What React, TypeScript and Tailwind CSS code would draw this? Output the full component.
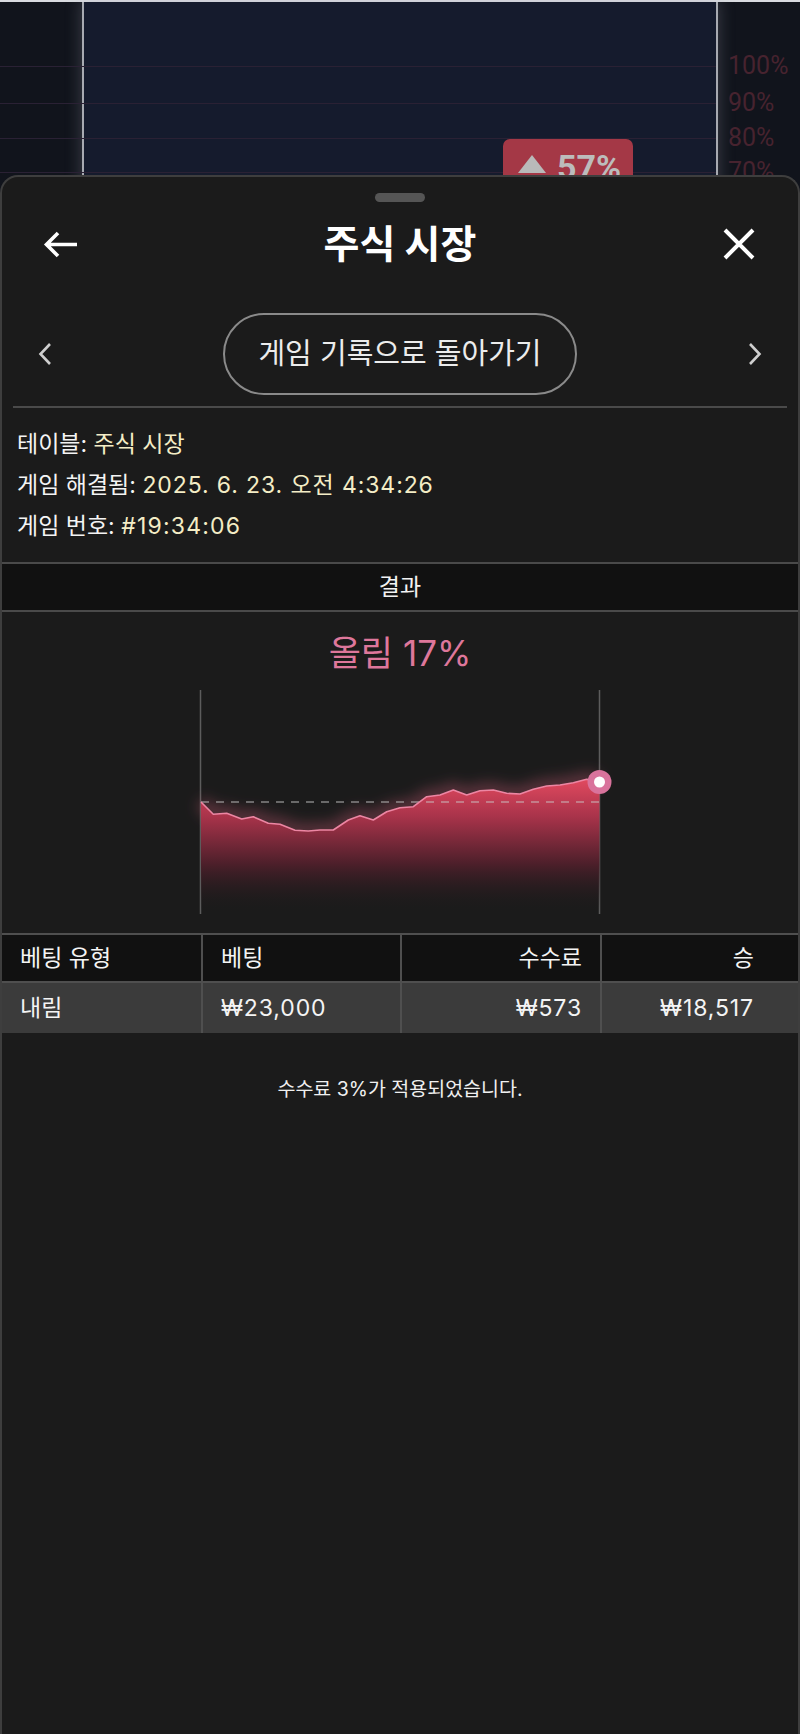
import React from "react";

const pts: [number, number][] = [
  [16, 116], [28.3, 128.3], [41.7, 127.3], [56.7, 133], [68.3, 130.7], [83.3, 137.3],
  [95, 138.3], [110, 144.3], [123.3, 145], [135, 144], [148.3, 144], [163.3, 134],
  [175, 129.7], [188.3, 134], [201.7, 125.7], [215, 121.7], [228.3, 120.7], [241.7, 110.7],
  [255, 109], [268.3, 104], [281.7, 109], [295, 104.7], [308.3, 104], [321.7, 107.3],
  [335, 108], [348.3, 103.3], [361.7, 100], [375, 99], [388.3, 96.7], [401.7, 93.3], [414.5, 95],
];

function Chart() {
  const line = pts.map((p, i) => `${i ? "L" : "M"}${p[0]} ${p[1]}`).join(" ");
  const area = `${line} L414.5 228 L16 228 Z`;
  return (
    <svg width="430" height="232" viewBox="0 0 430 232" className="block">
      <defs>
        <linearGradient id="fillG" x1="0" y1="90" x2="0" y2="226" gradientUnits="userSpaceOnUse">
          <stop offset="0" stopColor="#e64b61" />
          <stop offset="0.3" stopColor="#a8334a" />
          <stop offset="0.65" stopColor="#4c1f2a" />
          <stop offset="1" stopColor="#1b1b1b" stopOpacity="0" />
        </linearGradient>
        <filter id="glow" x="-10%" y="-50%" width="120%" height="200%">
          <feGaussianBlur stdDeviation="7" />
        </filter>
      </defs>
      <line x1="15.5" y1="4" x2="15.5" y2="228" stroke="#5c5c5c" strokeWidth="1.5" />
      <line x1="414.5" y1="4" x2="414.5" y2="228" stroke="#5c5c5c" strokeWidth="1.5" />
      <path d={line} fill="none" stroke="#e0607f" strokeOpacity="0.35" strokeWidth="14" filter="url(#glow)" />
      <path d={area} fill="url(#fillG)" />
      <line x1="16" y1="116" x2="414" y2="116" stroke="#c9c9c9" strokeOpacity="0.6" strokeWidth="1.5" strokeDasharray="8 7" />
      <path d={line} fill="none" stroke="#ec86a3" strokeWidth="1.6" strokeLinejoin="round" />
      <circle cx="414.5" cy="96" r="12" fill="#d9739c" />
      <circle cx="414.5" cy="96" r="5.5" fill="#ffffff" />
    </svg>
  );
}

function Backdrop() {
  return (
    <div className="relative h-[195px] w-full overflow-hidden bg-[#11141c]">
      <div className="absolute left-0 top-0 h-[2px] w-full bg-[#d9dbe0]" />
      <div className="absolute left-[82px] top-[2px] bottom-0 w-[636px] border-x-2 border-[#a7aab1] bg-[#151b2d] shadow-[0_0_14px_2px_rgba(160,165,180,0.25)]" />
      {[66, 103, 138, 172].map((y) => (
        <div key={y} className="absolute left-0 h-px w-[716px] bg-[#2a2134]" style={{ top: y }} />
      ))}
      {[
        ["100%", 66],
        ["90%", 103],
        ["80%", 138],
        ["70%", 172],
      ].map(([t, y]) => (
        <div
          key={t as string}
          className="absolute left-[728px] font-['Roboto',sans-serif] text-[25px] leading-[30px] text-[#47232f]"
          style={{ top: (y as number) - 15 }}
        >
          {t}
        </div>
      ))}
      <div className="absolute left-[503px] top-[139px] flex h-[60px] w-[130px] items-start gap-[10px] rounded-[7px] bg-[#a43846] pl-[14px] pt-[8px]">
        <svg width="30" height="20" viewBox="0 0 30 20" className="mt-[7px]">
          <polygon points="15,1 29,19 1,19" fill="#b9b9b9" />
        </svg>
        <span className="font-['Roboto',sans-serif] text-[34px] font-bold leading-[40px] text-[#bcbcbc]">57%</span>
      </div>
    </div>
  );
}

export default function App() {
  return (
    <div className="flex h-[1734px] w-[800px] flex-col overflow-hidden bg-[#11141c] font-['Inter','Noto_Sans_CJK_KR',sans-serif] text-white">
      <Backdrop />
      <div className="relative -mt-[20px] flex flex-1 flex-col rounded-t-[18px] border-2 border-b-0 border-[#3e3e3e] bg-[#1b1b1b]">
        <div className="mx-auto mt-[16px] h-[9px] w-[50px] rounded-full bg-[#555555]" />
        <div className="mt-[14px] flex h-[56px] items-center justify-between pl-[41px] pr-[42px]">
          <svg width="35" height="27" viewBox="0 0 35 27">
            <path d="M34 13.5H4 M15 2 L3.5 13.5 L15 25" fill="none" stroke="#ffffff" strokeWidth="3.6" />
          </svg>
          <div className="text-[39px] font-bold leading-[56px]">주식 시장</div>
          <svg width="34" height="34" viewBox="0 0 34 34">
            <path d="M3 3 L31 31 M31 3 L3 31" fill="none" stroke="#ffffff" strokeWidth="4" />
          </svg>
        </div>
        <div className="mt-[41px] flex h-[82px] items-center justify-between px-[36px]">
          <svg width="14" height="24" viewBox="0 0 14 24">
            <path d="M12 2 L2.5 12 L12 22" fill="none" stroke="#cfcfcf" strokeWidth="2.6" />
          </svg>
          <div className="flex h-[82px] w-[354px] items-center justify-center rounded-full border-2 border-[#8a8a8a] text-[29px] leading-[40px] text-[#ececec]">
            게임 기록으로 돌아가기
          </div>
          <svg width="14" height="24" viewBox="0 0 14 24">
            <path d="M2 2 L11.5 12 L2 22" fill="none" stroke="#cfcfcf" strokeWidth="2.6" />
          </svg>
        </div>
        <div className="mx-[11px] mt-[11px] h-[2px] bg-[#4a4a4a]" />
        <div className="pl-[15px] pt-[16px] text-[23px] leading-[41px]">
          <div>
            <span className="text-[#f4f4f4]">테이블: </span>
            <span className="text-[#f4edc6]">주식 시장</span>
          </div>
          <div>
            <span className="text-[#f4f4f4]">게임 해결됨: </span>
            <span className="tracking-[0.9px] text-[#f4edc6]">2025. 6. 23. 오전 4:34:26</span>
          </div>
          <div>
            <span className="text-[#f4f4f4]">게임 번호: </span>
            <span className="tracking-[1.2px] text-[#f4edc6]">#19:34:06</span>
          </div>
        </div>
        <div className="mt-[15px] flex h-[50px] items-center justify-center border-y-2 border-[#4a4a4a] bg-[#111111] text-[23px] text-[#f2f2f2]">
          결과
        </div>
        <div className="mt-[21px] text-center text-[35px] leading-[40px] text-[#de779b]">올림 17%</div>
        <div className="mt-[13px] flex justify-center">
          <Chart />
        </div>
        <div className="mt-[15px] grid grid-cols-[199px_199px_200px_1fr] text-[23px] text-[#f4f4f4]">
          <div className="flex h-[50px] items-center border-y-2 border-[#4f4f4f] bg-[#111111] px-[18px]">베팅 유형</div>
          <div className="flex h-[50px] items-center border-y-2 border-l-2 border-[#4f4f4f] bg-[#111111] px-[18px]">베팅</div>
          <div className="flex h-[50px] items-center justify-end border-y-2 border-l-2 border-[#4f4f4f] bg-[#111111] pr-[18px]">수수료</div>
          <div className="flex h-[50px] items-center justify-end border-y-2 border-l-2 border-[#4f4f4f] bg-[#111111] pr-[44px]">승</div>
          <div className="flex h-[50px] items-center bg-[#3b3b3b] px-[18px]">내림</div>
          <div className="flex h-[50px] items-center border-l-2 border-[#4f4f4f] bg-[#3b3b3b] px-[18px] tracking-[0.9px]">₩23,000</div>
          <div className="flex h-[50px] items-center justify-end border-l-2 border-[#4f4f4f] bg-[#3b3b3b] pr-[18px] tracking-[0.9px]">₩573</div>
          <div className="flex h-[50px] items-center justify-end border-l-2 border-[#4f4f4f] bg-[#3b3b3b] pr-[44px] tracking-[0.9px]">₩18,517</div>
        </div>
        <div className="mt-[42px] text-center text-[19.5px] leading-[28px] text-[#f0f0f0]">수수료 3%가 적용되었습니다.</div>
      </div>
    </div>
  );
}
